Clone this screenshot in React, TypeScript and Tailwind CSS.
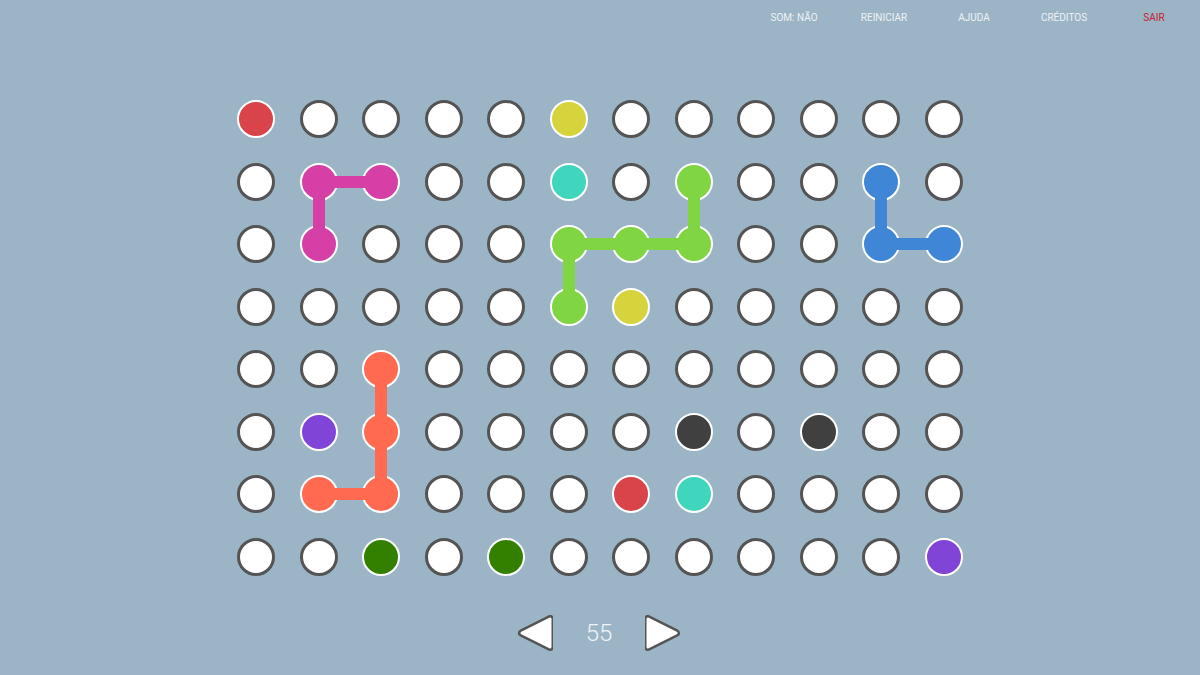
import React from "react";

const COLORS: Record<string, string> = {
  r: "bg-[#d9434a]",
  y: "bg-[#d6d43c]",
  m: "bg-[#d63fa6]",
  t: "bg-[#40d6bd]",
  g: "bg-[#7fd642]",
  b: "bg-[#3f86d6]",
  o: "bg-[#ff6a50]",
  p: "bg-[#8044d6]",
  k: "bg-[#404040]",
  d: "bg-[#338000]",
};

const BOARD = [
  "r....y......",
  ".mm..t.g..b.",
  ".m...ggg..bb",
  ".....gy.....",
  "..o.........",
  ".po....k.k..",
  ".oo...rt....",
  "..d.d......p",
];

// connectors: [row, col, dir]
const LINKS: [number, number, "r" | "d"][] = [
  [1, 1, "r"],
  [1, 1, "d"],
  [1, 7, "d"],
  [2, 5, "r"],
  [2, 6, "r"],
  [2, 5, "d"],
  [1, 10, "d"],
  [2, 10, "r"],
  [4, 2, "d"],
  [5, 2, "d"],
  [6, 1, "r"],
];

function Cell({ row, col, c }: { row: number; col: number; c: string }) {
  const links = LINKS.filter((l) => l[0] === row && l[1] === col);
  const color = COLORS[c];
  return (
    <div className="relative flex h-[62.5px] w-[62.5px] items-center justify-center">
      {links.map(([, , dir]) =>
        dir === "r" ? (
          <div
            key="r"
            className={`absolute left-1/2 top-1/2 z-10 h-[12px] w-[62.5px] -translate-y-1/2 ${color}`}
          />
        ) : (
          <div
            key="d"
            className={`absolute left-1/2 top-1/2 z-10 h-[62.5px] w-[12px] -translate-x-1/2 ${color}`}
          />
        )
      )}
      {c === "." ? (
        <div className="h-[38px] w-[38px] rounded-full border-[3px] border-[#545454] bg-white" />
      ) : (
        <div className={`h-[38px] w-[38px] rounded-full border-2 border-white ${color}`} />
      )}
    </div>
  );
}

function Arrow({ left }: { left?: boolean }) {
  const pts = left ? "5,18 33,4 33,32" : "31,18 3,4 3,32";
  return (
    <svg width="36" height="36" viewBox="0 0 36 36">
      <polygon points={pts} fill="#555555" stroke="#555555" strokeWidth="8" strokeLinejoin="round" />
      <polygon points={pts} fill="#ffffff" stroke="#ffffff" strokeWidth="3" strokeLinejoin="round" />
    </svg>
  );
}

export default function App() {
  const nav = ["SOM: NÃO", "REINICIAR", "AJUDA", "CRÉDITOS", "SAIR"];
  return (
    <div
      className="flex h-[675px] w-full flex-col items-center bg-[#9bb5c7]"
      style={{ fontFamily: "Roboto, 'Liberation Sans', sans-serif" }}
    >
      <nav className="flex h-[35px] w-full items-center justify-end pr-[1px] text-[10px]">
        {nav.map((n) => (
          <span
            key={n}
            className={`w-[90px] text-center ${n === "SAIR" ? "text-[#c4202c]" : "text-[#eef2f5]"}`}
          >
            {n}
          </span>
        ))}
      </nav>

      <div className="mt-[53px] grid grid-cols-12">
        {BOARD.map((line, row) =>
          line.split("").map((c, col) => <Cell key={`${row}-${col}`} row={row} col={col} c={c} />)
        )}
      </div>

      <div className="mt-[27px] flex items-center gap-[33px] pr-[2px]">
        <Arrow left />
        <span className="text-[24px] font-light text-[#eef3f6]">55</span>
        <Arrow />
      </div>
    </div>
  );
}
